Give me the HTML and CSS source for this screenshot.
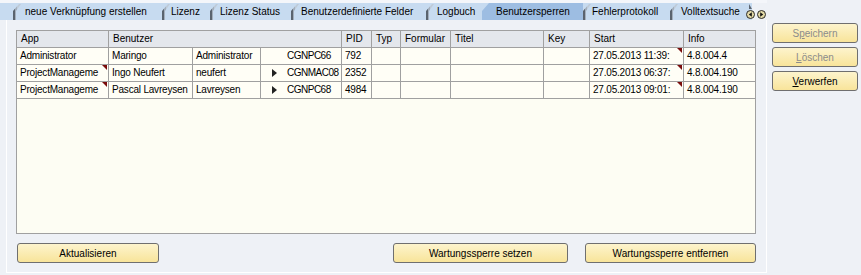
FILE: index.html
```html
<!DOCTYPE html>
<html lang="de">
<head>
    <meta charset="UTF-8">
    <title>Benutzersperren</title>
    <link rel="stylesheet" href="styles.css">
</head>
<body>
    <div class="app">
        <div class="main">
            <div class="tabbar">
                <div class="tabs">
                    <div class="tab">neue Verknüpfung erstellen</div>
                    <div class="tab">Lizenz</div>
                    <div class="tab">Lizenz Status</div>
                    <div class="tab">Benutzerdefinierte Felder</div>
                    <div class="tab">Logbuch</div>
                    <div class="tab active">Benutzersperren</div>
                    <div class="tab">Fehlerprotokoll</div>
                    <div class="tab">Volltextsuche</div>
                </div>
                <div class="tab-nav">
                    <svg width="20" height="9" viewBox="0 0 20 9">
                        <circle cx="4.5" cy="4.5" r="4" fill="#e2d9a6" stroke="#2b2b2b"/>
                        <path d="M2.8 4.5 L5.8 2.3 L5.8 6.7 Z" fill="#111"/>
                        <circle cx="15.5" cy="4.5" r="4" fill="#e2d9a6" stroke="#2b2b2b"/>
                        <path d="M17.2 4.5 L14.2 2.3 L14.2 6.7 Z" fill="#111"/>
                    </svg>
                </div>
            </div>

            <div class="panel">
                <div class="grid-box">
                    <div class="grid">
                        <div class="th">App</div>
                        <div class="th wide">Benutzer</div>
                        <div class="th">PID</div>
                        <div class="th">Typ</div>
                        <div class="th">Formular</div>
                        <div class="th">Titel</div>
                        <div class="th">Key</div>
                        <div class="th">Start</div>
                        <div class="th">Info</div>

                        <div class="td">Administrator</div>
                        <div class="td">Maringo</div>
                        <div class="td">Administrator</div>
                        <div class="td host"><span class="arrow off"></span>CGNPC66</div>
                        <div class="td">792</div>
                        <div class="td"></div>
                        <div class="td"></div>
                        <div class="td"></div>
                        <div class="td"></div>
                        <div class="td mark">27.05.2013 11:39:</div>
                        <div class="td">4.8.004.4</div>

                        <div class="td mark">ProjectManageme</div>
                        <div class="td">Ingo Neufert</div>
                        <div class="td">neufert</div>
                        <div class="td host"><span class="arrow"></span>CGNMAC08</div>
                        <div class="td">2352</div>
                        <div class="td"></div>
                        <div class="td"></div>
                        <div class="td"></div>
                        <div class="td"></div>
                        <div class="td mark">27.05.2013 06:37:</div>
                        <div class="td">4.8.004.190</div>

                        <div class="td mark">ProjectManageme</div>
                        <div class="td">Pascal Lavreysen</div>
                        <div class="td">Lavreysen</div>
                        <div class="td host"><span class="arrow"></span>CGNPC68</div>
                        <div class="td">4984</div>
                        <div class="td"></div>
                        <div class="td"></div>
                        <div class="td"></div>
                        <div class="td"></div>
                        <div class="td mark">27.05.2013 09:01:</div>
                        <div class="td">4.8.004.190</div>
                    </div>
                </div>

                <div class="actions">
                    <button class="btn btn-refresh">Aktualisieren</button>
                    <div class="actions-right">
                        <button class="btn btn-set">Wartungssperre setzen</button>
                        <button class="btn btn-remove">Wartungssperre entfernen</button>
                    </div>
                </div>
            </div>
        </div>

        <div class="side">
            <button class="btn disabled">S<u>p</u>eichern</button>
            <button class="btn disabled"><u>L</u>öschen</button>
            <button class="btn"><u>V</u>erwerfen</button>
        </div>
    </div>
</body>
</html>
```

FILE: styles.css
```css
body {
    margin: 0;
    background-color: #eef1f6;
    color: #000;
    font: 10px "Liberation Sans", Arial, sans-serif;
}

.app {
    display: flex;
    align-items: flex-start;
}

.main {
    width: 767px;
}

/* Reiterleiste */
.tabbar {
    display: flex;
    align-items: flex-start;
    height: 20px;
    background: linear-gradient(#f4f6fa 0 3px, transparent 3px);
}

.tabs {
    display: flex;
    height: 17px;
    margin-top: 3px;
    padding-left: 13px;
    background-color: #c7dbf0;
}

.tab {
    position: relative;
    height: 17px;
    line-height: 17px;
    padding-left: 10px;
    box-sizing: border-box;
    white-space: nowrap;
}

.tab::before {
    content: "";
    position: absolute;
    left: 0;
    top: 0;
    width: 8px;
    height: 17px;
    background: linear-gradient(to right, #5a636e 0 2px, #a3aebb 2px 4px, #bfcbd8 4px);
    clip-path: polygon(0 17px, 0 8px, 6px 1px, 8px 1px, 3px 8px, 3px 17px);
}

.tab:nth-child(1) { width: 149px; padding-left: 12px; }
.tab:nth-child(2) { width: 48px; padding-left: 9px; }
.tab:nth-child(3) { width: 81px; }
.tab:nth-child(4) { width: 135px; }
.tab:nth-child(5) { width: 56px; padding-left: 11px; }
.tab:nth-child(6) { width: 101px; padding-left: 14px; }
.tab:nth-child(7) { width: 87px; padding-left: 9px; }
.tab:nth-child(8) { width: 82px; padding-left: 11px; }

.tab:nth-child(8)::after {
    content: "";
    position: absolute;
    right: 0;
    top: 1px;
    width: 3px;
    height: 5px;
    background-color: #5b6571;
    clip-path: polygon(0 0, 100% 100%, 0 100%);
}

.tab.active {
    background-color: #9dbde2;
    clip-path: polygon(0 100%, 0 8px, 7px 0, 100% 0, 100% 100%);
}

.tab.active::before {
    display: none;
}

.tab-nav {
    margin-top: 10px;
    margin-left: -6px;
    height: 9px;
}

.tab-nav svg {
    display: block;
}

/* Inhaltsbereich */
.panel {
    width: 761px;
    margin-left: 6px;
    box-sizing: border-box;
    border: 1px solid #fff;
    border-top: none;
    padding: 10px 10px 9px 9px;
}

.grid-box {
    width: 740px;
    height: 204px;
    box-sizing: border-box;
    border: 1px solid #a0a0a0;
    background-color: #fdfdf3;
    overflow: hidden;
}

.grid {
    display: grid;
    grid-template-columns: 92px 84px 68px 81px 30px 29px 50px 93px 46px 94px 72px;
    grid-auto-rows: 17px;
    width: 739px;
}

.th,
.td {
    position: relative;
    box-sizing: border-box;
    border-right: 1px solid #a0a0a0;
    border-bottom: 1px solid #a0a0a0;
    line-height: 16px;
    padding: 0 3px;
    white-space: nowrap;
    overflow: hidden;
}

.th {
    background-color: #e4e7ec;
    padding-left: 4px;
}

.th.wide {
    grid-column: span 3;
}

.td {
    background-color: #fffef6;
    letter-spacing: -0.2px;
}

.td.host {
    padding-left: 11px;
    letter-spacing: -0.5px;
}

.arrow {
    display: inline-block;
    width: 0;
    height: 0;
    margin-right: 10px;
    vertical-align: -1px;
    border-left: 5px solid #222;
    border-top: 4px solid transparent;
    border-bottom: 4px solid transparent;
}

.arrow.off {
    border-left-color: transparent;
}

.td.mark::after {
    content: "";
    position: absolute;
    top: 0;
    right: 1px;
    border-top: 5px solid #7a0c0c;
    border-left: 5px solid transparent;
}

/* Schaltflächen */
.btn {
    height: 20px;
    padding: 0;
    box-sizing: border-box;
    border: 1px solid #6f6f6f;
    border-radius: 3px;
    background: linear-gradient(#fdf4cd, #f8e49a);
    color: #000;
    font: 10px "Liberation Sans", Arial, sans-serif;
}

.btn.disabled {
    color: #8c8c8c;
}

.actions {
    display: flex;
    justify-content: space-between;
    margin-top: 9px;
    padding-left: 1px;
}

.actions-right {
    display: flex;
    gap: 17px;
}

.btn-refresh { width: 142px; }
.btn-set { width: 175px; }
.btn-remove { width: 171px; }

.side {
    display: flex;
    flex-direction: column;
    gap: 4px;
    margin-left: 5px;
    padding-top: 23px;
}

.side .btn {
    width: 86px;
}
```
